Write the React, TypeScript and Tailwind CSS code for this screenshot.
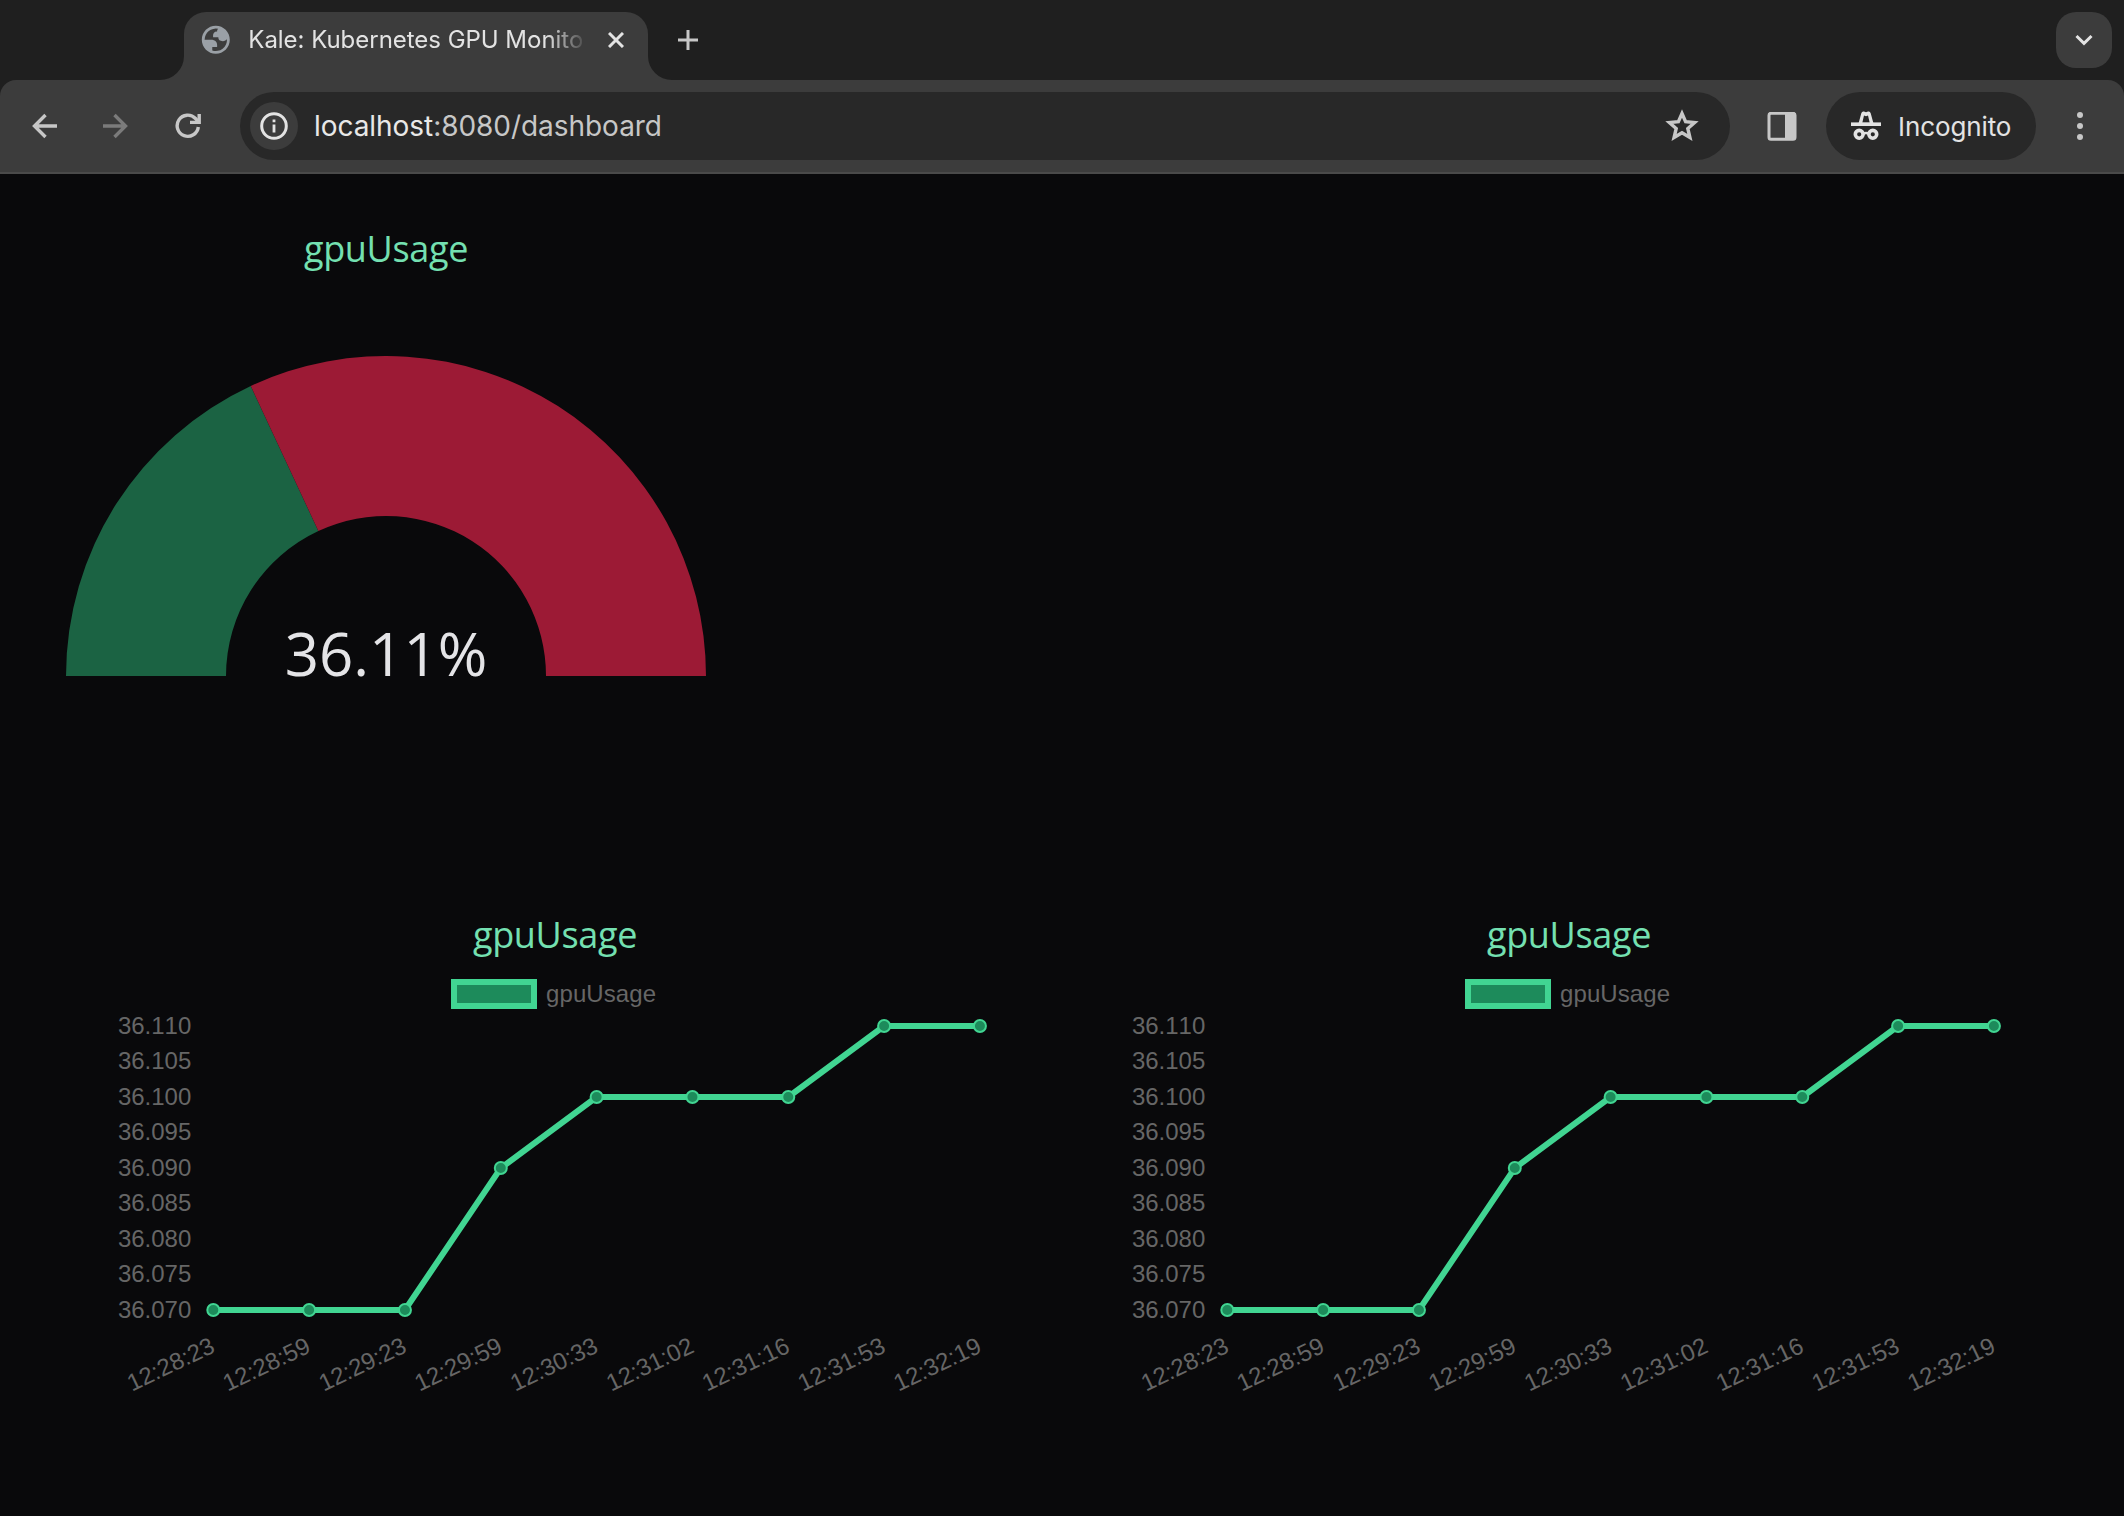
const LABELS = ['12:28:23', '12:28:59', '12:29:23', '12:29:59', '12:30:33', '12:31:02', '12:31:16', '12:31:53', '12:32:19'];
const VALUES = [36.07, 36.07, 36.07, 36.09, 36.1, 36.1, 36.1, 36.11, 36.11];
const TICKS = [36.11, 36.105, 36.1, 36.095, 36.09, 36.085, 36.08, 36.075, 36.07];
const SHARE = 36.11;

const px = (i: number) => 213.3 + i * 95.83;
const py = (v: number) => 72 + ((36.11 - v) / 0.005) * 35.5;

function Tab() {
  return (
    <div className="relative ml-[184px] flex h-[68px] w-[464px] items-start rounded-t-[22px] bg-[#3c3c3c]">
      <svg className="absolute -left-[24px] bottom-0 size-6" viewBox="0 0 24 24">
        <path d="M24 0A24 24 0 0 1 0 24H24Z" fill="#3c3c3c" />
      </svg>
      <svg className="absolute -right-[24px] bottom-0 size-6" viewBox="0 0 24 24">
        <path d="M0 0A24 24 0 0 0 24 24H0Z" fill="#3c3c3c" />
      </svg>
      <svg className="mt-[11.2px] ml-[15.2px] size-[33.6px] shrink-0" viewBox="0 0 24 24" fill="#9aa0a6">
        <path
          d="M12 2C6.48 2 2 6.48 2 12s4.48 10 10 10 10-4.48 10-10S17.52 2 12 2zM4 12h4.4c3.407.022 4.922 1.73 4.543 5.127H9.488v2.47a8.004 8.004 0 0 0 10.498-8.083C19.327 12.504 18.332 13 17 13c-2.137 0-3.206-.916-3.206-2.75h-3.748c-.274-2.728.683-4.092 2.87-4.092 0-.975.327-1.597.811-1.97A8.004 8.004 0 0 0 4 12z"
          fillRule="evenodd"
        />
      </svg>
      <div className="mt-[10px] ml-[15.500px] w-[334px] overflow-hidden whitespace-nowrap font-['Inter'] text-[24px] leading-[36px] tracking-[-0.03px] text-[#e3e3e3] [mask-image:linear-gradient(to_right,black_298px,transparent_340px)]">
        Kale: Kubernetes GPU Monito
      </div>
      <svg className="mt-5 ml-[26px] size-4 shrink-0" viewBox="0 0 16 16" stroke="#e3e3e3" strokeWidth="3">
        <path d="M1 1L15 15M15 1L1 15" />
      </svg>
    </div>
  );
}

function TabStrip() {
  return (
    <div className="flex h-20 items-start pt-3">
      <Tab />
      <svg className="mt-[18px] ml-[30px] size-5" viewBox="0 0 20 20" stroke="#c7c7c7" strokeWidth="3">
        <path d="M10 0V20M0 10H20" />
      </svg>
      <div className="mr-3 ml-auto flex size-14 items-center justify-center rounded-[20px] bg-[#3c3c3c]">
        <svg className="size-5" viewBox="0 0 20 20" fill="none" stroke="#e3e3e3" strokeWidth="3">
          <path d="M2.500 6L10 13.300L17.500 6" />
        </svg>
      </div>
    </div>
  );
}

function Toolbar() {
  return (
    <div className="flex h-[94px] items-start rounded-t-[16px] border-b-2 border-[#4a4a4a] bg-[#3c3c3c] pt-3">
      <svg className="mt-5 ml-8 h-7 w-[25px]" viewBox="0 0 25 28" fill="none" stroke="#c7c7c7" strokeWidth="3.4">
        <path d="M25 14H2.5M13.5 3L2.5 14L13.5 25" />
      </svg>
      <svg className="mt-5 ml-[46px] h-7 w-[25px]" viewBox="0 0 25 28" fill="none" stroke="#7b7b7b" strokeWidth="3.4">
        <path d="M0 14H22.5M11.5 3L22.5 14L11.5 25" />
      </svg>
      <svg className="mt-5 ml-[47px] h-7 w-[27px]" viewBox="0 0 27 28" fill="none" stroke="#c7c7c7" strokeWidth="3.4">
        <path d="M23.3 15A10.6 10.6 0 1 1 20.5 6.5L23.5 9.8" />
        <path d="M24.2 2V10.4H15" />
      </svg>
      <div className="ml-[38px] flex h-[68px] w-[1490px] items-center rounded-full bg-[#282828] pl-[10px]">
        <div className="flex size-12 items-center justify-center rounded-full bg-[#3c3c3c]">
          <svg className="size-7" viewBox="0 0 28 28" fill="none" stroke="#e3e3e3">
            <circle cx="14" cy="14" r="12.3" strokeWidth="3" />
            <path d="M14 12.5V20.5M14 7.5V10.3" strokeWidth="2.8" />
          </svg>
        </div>
        <div className="ml-4 whitespace-nowrap font-['Inter'] text-[28px] leading-[40px] tracking-[-0.05px] text-[#c7c7c7]">
          <span className="text-[#e8e8e8]">localhost</span>:8080/dashboard
        </div>
        <svg className="mr-[31px] ml-auto size-[34px]" viewBox="0 0 34 34" fill="none" stroke="#c7c7c7" strokeWidth="3.4">
          <path d="M17 4.500L20.600 12.700L29.600 13.500L22.800 19.500L24.900 28.500L17 23.700L9.100 28.500L11.200 19.500L4.400 13.500L13.400 12.700Z" />
        </svg>
      </div>
      <svg className="mt-5 ml-[37px] size-[30px]" viewBox="0 0 30 30">
        <rect x="2" y="1.3" width="26" height="26" rx="2" fill="none" stroke="#c7c7c7" strokeWidth="3" />
        <path d="M18 1H28V27H18Z" fill="#c7c7c7" />
      </svg>
      <div className="ml-[29px] flex h-[68px] w-[210px] items-center rounded-full bg-[#282828] pl-[25px]">
        <svg className="h-[30px] w-[30px]" viewBox="0 0 30 30" fill="none">
          <path d="M7.500 12.500L10.300 2.200Q11 0 13 .600L15 1.300L17 .600Q19 0 19.700 2.200L22.500 12.500Z" fill="#e3e3e3" />
          <path d="M11.300 11.700L13 4.400L15 5.300L17 4.400L18.700 11.700Z" fill="#282828" />
          <path d="M0 13.200H30" stroke="#e3e3e3" strokeWidth="3.6" />
          <circle cx="8.200" cy="23.300" r="3.900" stroke="#e3e3e3" strokeWidth="3.600" />
          <circle cx="21.800" cy="23.300" r="3.900" stroke="#e3e3e3" strokeWidth="3.600" />
          <path d="M12 22.800Q15 21.200 18 22.800" stroke="#e3e3e3" strokeWidth="2.6" />
        </svg>
        <span className="mt-[2px] ml-[17px] font-['Inter'] text-[26px] leading-[40px] tracking-[-0.1px] text-[#e3e3e3]">Incognito</span>
      </div>
      <svg className="mt-5 ml-10 h-7 w-2" viewBox="0 0 8 28" fill="#c7c7c7">
        <circle cx="4" cy="3" r="3" />
        <circle cx="4" cy="14" r="3" />
        <circle cx="4" cy="25" r="3" />
      </svg>
    </div>
  );
}

function Title() {
  return <h2 className="text-center font-['Open_Sans'] text-[36px] leading-[49px] tracking-[-0.35px] text-[#74e0b1]">gpuUsage</h2>;
}

function Gauge() {
  const a = (SHARE / 100) * Math.PI;
  const ox = 320 - 320 * Math.cos(a);
  const oy = 320 - 320 * Math.sin(a);
  const ix = 320 - 160 * Math.cos(a);
  const iy = 320 - 160 * Math.sin(a);
  return (
    <section className="ml-[66px] w-[640px] pt-[50px]">
      <Title />
      <svg className="mt-[83px] block h-[344px] w-[640px]" viewBox="0 0 640 344">
        <path d={`M0 320A320 320 0 0 1 ${ox} ${oy}L${ix} ${iy}A160 160 0 0 0 160 320Z`} fill="#1b6343" />
        <path d={`M${ox} ${oy}A320 320 0 0 1 640 320H480A160 160 0 0 0 ${ix} ${iy}Z`} fill="#9c1a35" />
        <text x="320" y="320" textAnchor="middle" fontSize="60" fill="#e4e4e7" className="font-['Open_Sans']">
          36.11%
        </text>
      </svg>
    </section>
  );
}

function LineChart() {
  return (
    <section className="w-[1014px]">
      <div className="ml-[96px] w-[918px]">
        <Title />
      </div>
      <svg
        className="block h-[500px] w-[1014px] overflow-visible font-['Liberation_Sans'] [font-kerning:none]"
        viewBox="0 5 1014 500"
        fontSize="24"
        fill="#666666"
      >
        <rect x="454" y="28" width="80" height="24" fill="#1d8b5b" stroke="#41d592" strokeWidth="6" />
        <text x="546" y="48" letterSpacing="0.1">gpuUsage</text>
        {TICKS.map((t) => (
          <text key={t} x="191.300" y={py(t) + 7.5} textAnchor="end">
            {t.toFixed(3)}
          </text>
        ))}
        {LABELS.map((l, i) => (
          <text key={l} textAnchor="end" transform={`translate(${px(i) + 3} 397.500) rotate(-25.500)`}>
            {l}
          </text>
        ))}
        <polyline points={VALUES.map((v, i) => `${px(i)},${py(v)}`).join(' ')} fill="none" stroke="#41d592" strokeWidth="6" />
        {VALUES.map((v, i) => (
          <circle key={i} cx={px(i)} cy={py(v)} r="6" fill="#1d8b5b" stroke="#41d592" strokeWidth="2" />
        ))}
      </svg>
    </section>
  );
}

export default function App() {
  return (
    <div className="flex h-[1516px] w-[2124px] flex-col overflow-hidden bg-[#1f1f1f]">
      <TabStrip />
      <Toolbar />
      <main className="flex-1 bg-[#09090b]">
        <Gauge />
        <div className="mt-[210px] flex">
          <LineChart />
          <LineChart />
        </div>
      </main>
    </div>
  );
}
